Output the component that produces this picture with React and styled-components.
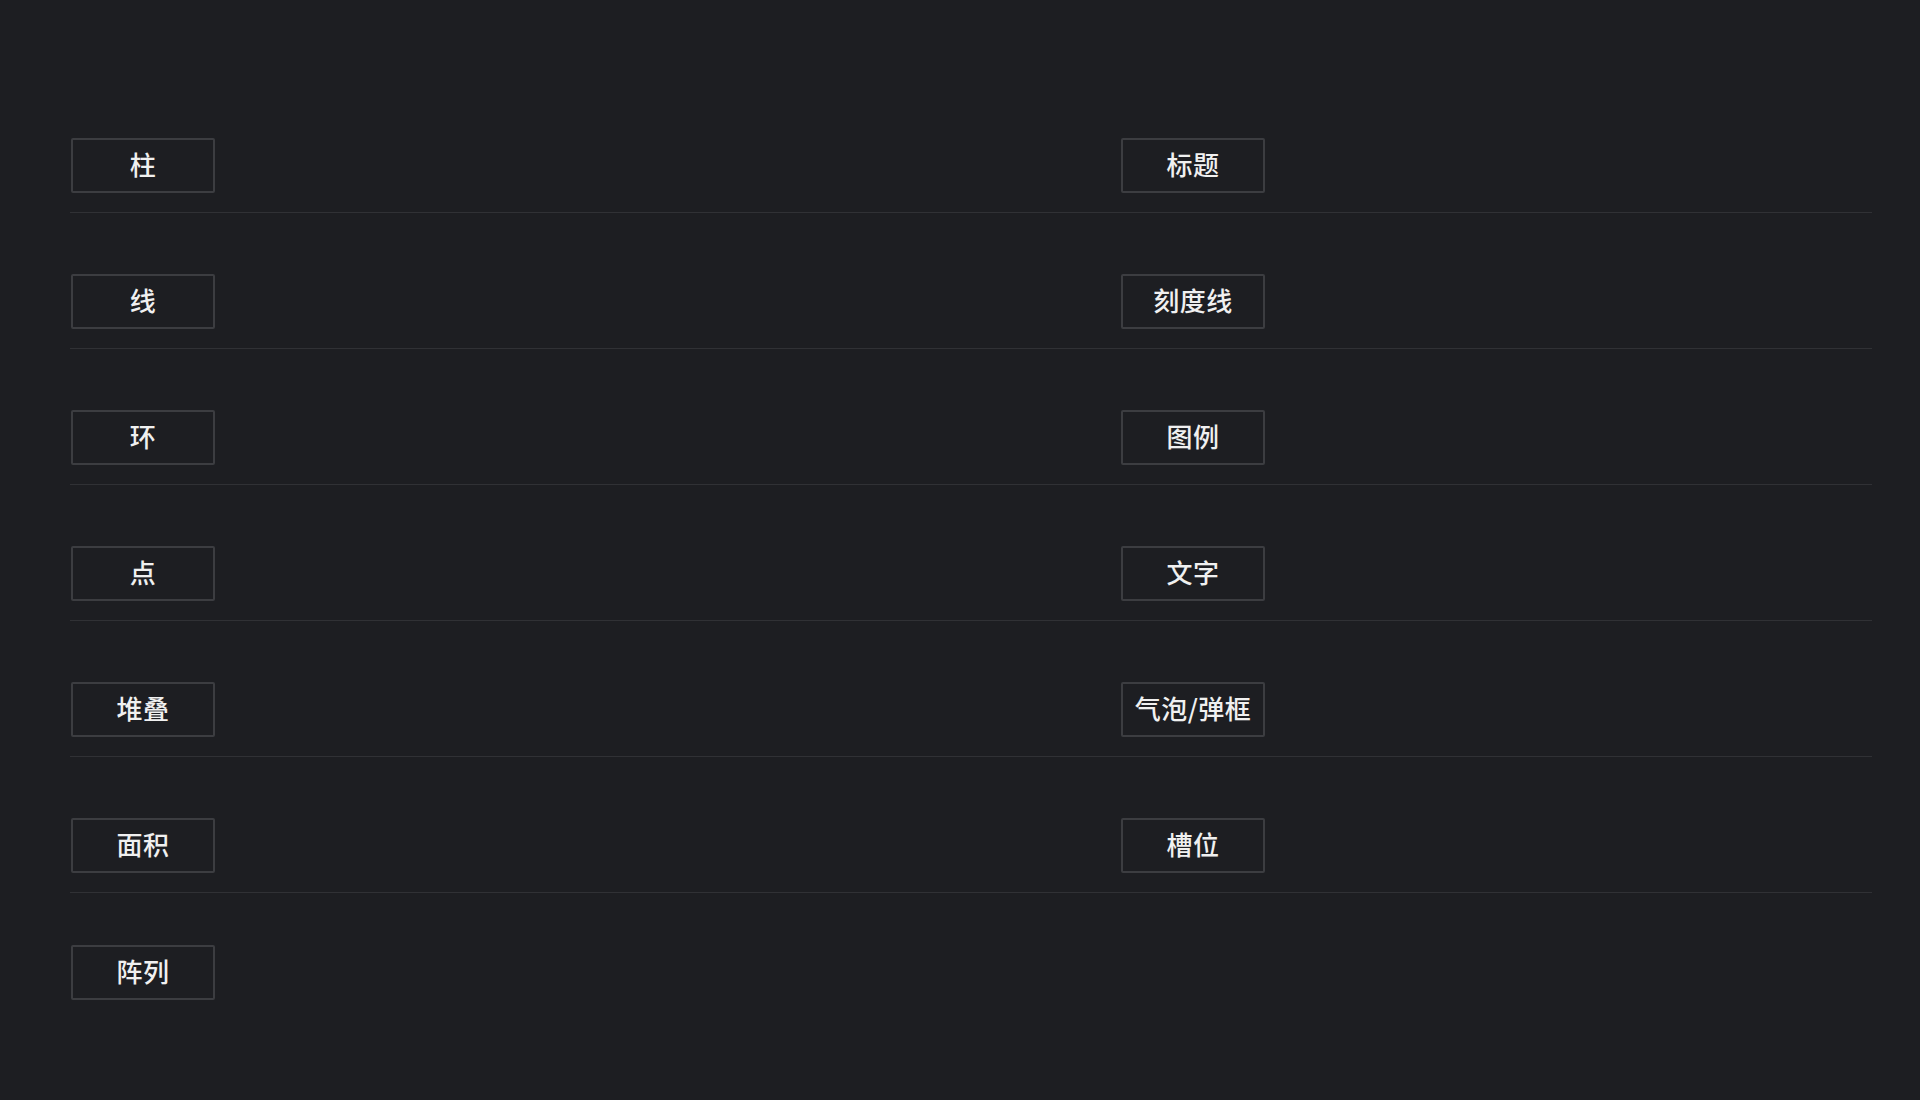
import React from "react";
import styled, { createGlobalStyle } from "styled-components";

const Global = createGlobalStyle`
  html, body {
    margin: 0;
    padding: 0;
    background: #1d1e22;
  }
  body {
    font-family: "Noto Sans CJK SC", "Noto Sans", sans-serif;
    color: #ececec;
  }
`;

const Page = styled.div`
  min-height: 1100px;
  box-sizing: border-box;
  padding: 77px 48px 0 70px;
  background: #1d1e22;
`;

const Grid = styled.div`
  display: grid;
  grid-template-columns: 1050px 1fr;
  grid-auto-flow: column;
  grid-template-rows: repeat(7, auto);
`;

const Cell = styled.div`
  display: flex;
  align-items: center;
  padding: ${(p) => (p.$last ? "52px 0 0 1px" : "61px 0 19px 1px")};
  border-bottom: ${(p) => (p.$last ? "none" : "1px solid #303135")};
`;

const Tag = styled.div`
  width: 144px;
  height: 55px;
  box-sizing: border-box;
  border: 2px solid #3c3d41;
  border-radius: 2px;
  display: flex;
  align-items: center;
  justify-content: center;
  padding-bottom: 3px;
  font-size: 26px;
  line-height: 1;
  font-weight: 500;
  letter-spacing: 0.5px;
  color: #f0f0f0;
  white-space: nowrap;
`;

const left = ["柱", "线", "环", "点", "堆叠", "面积", "阵列"];
const right = ["标题", "刻度线", "图例", "文字", "气泡/弹框", "槽位"];

export default function App() {
  return (
    <>
      <Global />
      <Page>
        <Grid>
          {left.map((t, i) => (
            <Cell key={"l" + t} $last={i === left.length - 1}>
              <Tag>{t}</Tag>
            </Cell>
          ))}
          {right.map((t) => (
            <Cell key={"r" + t}>
              <Tag>{t}</Tag>
            </Cell>
          ))}
        </Grid>
      </Page>
    </>
  );
}
